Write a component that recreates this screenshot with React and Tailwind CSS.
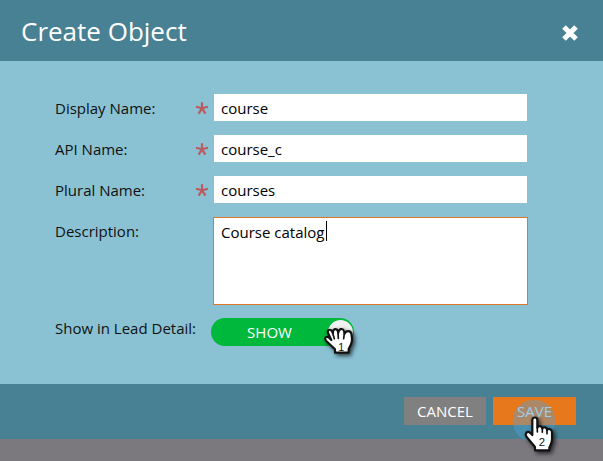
import React, { useState } from "react";

function RequiredMark() {
  return (
    <svg className="h-[14px] w-[14px] shrink-0" viewBox="0 0 14 14" aria-hidden="true">
      <path
        d="M7 7.3V1.2M7 7.3L1 5.8M7 7.3L13 5.8M7 7.3L3.6 12.6M7 7.3L10.4 12.6"
        fill="none"
        stroke="#bb5a5f"
        strokeWidth="2.2"
      />
    </svg>
  );
}

function Field({ id, label, value }) {
  return (
    <div className="flex items-center">
      <label htmlFor={id} className="w-[140px] shrink-0">{label}</label>
      <RequiredMark />
      <input
        id={id}
        type="text"
        required
        defaultValue={value}
        className="ml-1 h-[29px] min-w-0 flex-1 border border-[#8ac2d3] bg-white px-[7px] text-black outline-none"
      />
    </div>
  );
}

function OpenHand() {
  return (
    <svg className="pointer-events-none absolute left-[110px] top-[5px] h-[44px] w-[44px] overflow-visible" viewBox="64 66 132 132" aria-hidden="true">
      <path
        d="M106 155V145L79 119C72 109 82 104 89 111L95 117L85 96C82 86 92 83 97 91L100 97C98 83 110 81 114 89L116 95C117 82 130 81 133 90L135 98C139 88 152 88 155 98L157 112C158 125 152 135 147 144V155Z"
        fill="#fff"
        stroke="#111"
        strokeWidth="6.5"
        strokeLinejoin="round"
        className="drop-shadow-[6px_6px_6px_rgba(0,0,0,0.7)]"
      />
      <path d="M99 96L104 113M115 94L116 112M134 97L132 113" fill="none" stroke="#111" strokeWidth="5" strokeLinecap="round" />
      <text x="125" y="150" textAnchor="middle" fontSize="32" fill="#111" className="font-['Liberation_Sans',sans-serif]">1</text>
    </svg>
  );
}

function PointingHand() {
  return (
    <svg className="pointer-events-none absolute left-[18px] top-0 h-[66px] w-[48px] overflow-visible" viewBox="33 -9 144 198" aria-hidden="true">
      <circle cx="102" cy="63" r="64" fill="#4fa3dc" opacity="0.4" />
      <path
        d="M105 151V141L80 111C73 101 82 91 90 98L97 105V60C97 50 112 50 112 60V83C115 76 126 77 127 86C130 79 141 81 141 90C146 84 156 88 156 97V118C156 130 151 136 148 143V151Z"
        fill="#fff"
        stroke="#111"
        strokeWidth="6.5"
        strokeLinejoin="round"
        className="drop-shadow-[6px_6px_6px_rgba(0,0,0,0.7)]"
      />
      <path d="M112 82V96M127 85V97M141 89V101" fill="none" stroke="#111" strokeWidth="5" strokeLinecap="round" />
      <text x="126" y="137" textAnchor="middle" fontSize="34" fill="#111" className="font-['Liberation_Sans',sans-serif]">2</text>
    </svg>
  );
}

export default function App() {
  const [shown, setShown] = useState(true);
  return (
    <div className="min-h-screen bg-[#7b787e] font-['Open_Sans',sans-serif] text-[15px] leading-5 text-[#111]">
      <main>
        <header className="flex h-[61px] items-center justify-between bg-[#478193] pl-[21px] pr-6 text-white">
          <h1 className="text-[26px] leading-8">Create Object</h1>
          <button type="button" aria-label="Close" className="pt-1">
            <svg className="h-[18px] w-[18px]" viewBox="0 0 18 18" aria-hidden="true">
              <path d="M3 3L15 15M15 3L3 15" stroke="#fff" strokeWidth="5" />
            </svg>
          </button>
        </header>

        <form className="flex flex-col gap-3 bg-[#8ac2d3] pb-[38px] pl-[55px] pr-[75px] pt-8">
          <Field id="display-name" label="Display Name:" value="course" />
          <Field id="api-name" label="API Name:" value="course_c" />
          <Field id="plural-name" label="Plural Name:" value="courses" />
          <div className="flex items-start pt-px">
            <label htmlFor="description" className="w-[158px] shrink-0 pt-1">Description:</label>
            <div className="relative flex min-w-0 flex-1">
              <textarea
                id="description"
                defaultValue="Course catalog"
                className="h-[88px] min-w-0 flex-1 resize-none border border-[#e0762a] bg-white px-[7px] py-1 text-black outline-none"
              />
              <span className="pointer-events-none absolute left-[113px] top-1 h-5 w-px bg-black" />
            </div>
          </div>
          <div className="flex items-start pt-px">
            <label htmlFor="lead-detail" className="w-[156px] shrink-0">Show in Lead Detail:</label>
            <div className="relative flex h-7 w-[143px] items-center rounded-full bg-[#00b83c] text-white">
              <input
                id="lead-detail"
                type="checkbox"
                role="switch"
                checked={shown}
                onChange={() => setShown(!shown)}
                className="absolute inset-0 cursor-pointer appearance-none"
              />
              <span className="pointer-events-none w-[117px] text-center">{shown ? "SHOW" : "HIDE"}</span>
              <span className="pointer-events-none h-[25px] w-[25px] rounded-full bg-[#f2f2f2]" />
              <OpenHand />
            </div>
          </div>
        </form>

        <footer className="flex h-[55px] items-start justify-end gap-[7px] bg-[#478193] pr-[27px] pt-[13px] text-white">
          <button type="button" className="h-7 w-[82px] bg-[#808080]">CANCEL</button>
          <div className="relative">
            <button type="submit" className="h-7 w-[83px] bg-[#e8781c] text-[#d0e6fa]">SAVE</button>
            <PointingHand />
          </div>
        </footer>
      </main>
    </div>
  );
}
